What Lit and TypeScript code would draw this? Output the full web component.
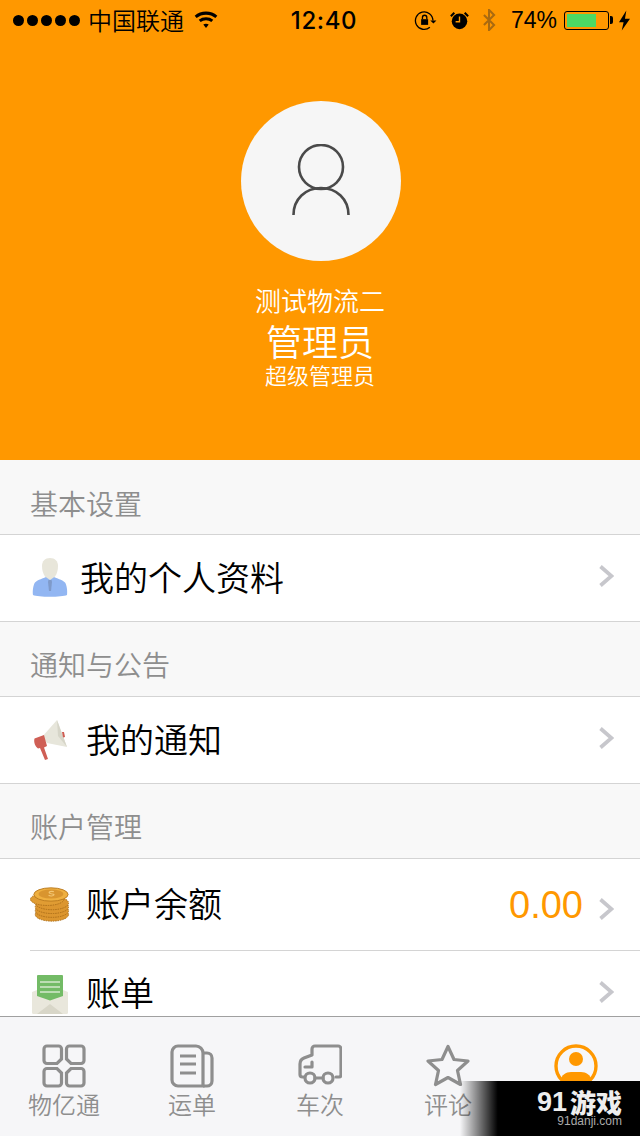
import { LitElement, html, css, svg } from 'lit';
import { customElement } from 'lit/decorators.js';

const personIcon = html`<svg width="36" height="40" viewBox="0 0 36 40">
  <path d="M1 37c-.6-4 .2-10 2-12.500 3-3 8.500-4 11-5.500h8c2.500 1.500 8 2.500 11 5.500 1.800 2.500 2.600 8.500 2 12.500-5 2.400-29 2.400-34 0z" fill="#92b6f2"/>
  <path d="M18 0c5 0 8 3 8 8 0 4-1 8-3 10.500l-5 3.500-5-3.500C11 16 10 12 10 8c0-5 3-8 8-8z" fill="#e8e6da"/>
  <path d="M16.500 22h3l.5 2-1 9h-2l-1-9z" fill="#7f9ac9"/>
</svg>`;

const hornIcon = html`<svg width="36" height="42" viewBox="0 0 36 42">
  <path d="M10 18 25 1l10 27-20-4z" fill="#e7e6db"/>
  <path d="M25 1l10 27-9-11z" fill="#d6d5c8"/>
  <path d="M30 13h2l1 5-2 .5z" fill="#ce5c52"/>
  <path d="M2.500 19.500 12 16l3 11-3 1.500 4 11.500-3 1-5-12-2 .5C3 27 1.500 23 2.500 19.500z" fill="#cf5f55"/>
</svg>`;

const coinsIcon = html`<svg width="42" height="37" viewBox="0 0 42 37">
  ${[29, 25, 21, 17].map(
    (y) => svg`<ellipse cx="23" cy=${y} rx="17.500" ry="7" fill="#dc962f" stroke="#a96c18" stroke-dasharray="1.500 1"/>`
  )}
  <ellipse cx="18" cy="13" rx="17.500" ry="6.500" fill="#e09c33" stroke="#a96c18" stroke-dasharray="1.500 1"/>
  <ellipse cx="22" cy="8" rx="18" ry="7" fill="#efb040" stroke="#b97a20"/>
  <ellipse cx="22" cy="7.500" rx="13" ry="4.800" fill="#d9952f"/>
  <path d="M25 5c-3-.8-6 .2-4.500 1.600s5.500.4 4.500 2-4.500.8-5.500.2" fill="none" stroke="#f3c673" stroke-width="1.200"/>
</svg>`;

const mailIcon = html`<svg width="36" height="39" viewBox="0 0 36 39">
  <path d="M0 17 5 15h26l5 2v20.500a1.500 1.500 0 0 1-1.500 1.500h-33A1.500 1.500 0 0 1 0 37.500z" fill="#e9e7dc"/>
  <path d="M5 39 18 29l13 10z" fill="#d8d6c8"/>
  <path d="M5 1a1 1 0 0 1 1-1h24a1 1 0 0 1 1 1v20l-13 4.500L5 21z" fill="#73bb66"/>
  <path d="M8 7h20M8 12h20M8 17h20" stroke="#d5e9cd" stroke-width="1.600"/>
</svg>`;

const tabIcons = {
  grid: html`<svg width="44" height="44" viewBox="0 0 44 44" fill="none" stroke="#8e8e8e" stroke-width="3.200">
    <path d="M5 2h11.500a3 3 0 0 1 3 3v10l-4.500 4.500H5a3 3 0 0 1-3-3V5a3 3 0 0 1 3-3z"/>
    <path d="M27.500 2H39a3 3 0 0 1 3 3v11.500a3 3 0 0 1-3 3H29L24.500 15V5a3 3 0 0 1 3-3z"/>
    <path d="M5 24.500h10l4.500 4.500v10a3 3 0 0 1-3 3H5a3 3 0 0 1-3-3V27.500a3 3 0 0 1 3-3z"/>
    <path d="M29 24.500h10a3 3 0 0 1 3 3V39a3 3 0 0 1-3 3H27.500a3 3 0 0 1-3-3V29z"/>
  </svg>`,
  doc: html`<svg width="44" height="44" viewBox="0 0 44 44" fill="none" stroke="#8e8e8e" stroke-width="3.200">
    <path d="M8 2h18a7 7 0 0 1 7 7v33H8a6 6 0 0 1-6-6V8a6 6 0 0 1 6-6z"/>
    <path d="M33 9h4a5 5 0 0 1 5 5v23a5 5 0 0 1-5 5h-4"/>
    <path d="M10 12h16M10 20h16M10 29h16"/>
  </svg>`,
  truck: html`<svg width="44" height="44" viewBox="0 0 44 44" fill="none" stroke="#8e8e8e" stroke-width="3.200" stroke-linecap="round" stroke-linejoin="round">
    <path d="M6 33H4.500A2.500 2.500 0 0 1 2 30.500V20c0-3 1.500-5 4-6l8-3V5a3 3 0 0 1 3-3h23a3 3 0 0 1 3 3v26a2 2 0 0 1-2 2h-3"/>
    <path d="M14 18v5H7"/>
    <path d="M17 34h8"/>
    <circle cx="12" cy="34" r="5"/>
    <circle cx="30" cy="34" r="5"/>
  </svg>`,
  star: html`<svg width="44" height="44" viewBox="0 0 44 44" fill="none" stroke="#8e8e8e" stroke-width="3.200" stroke-linejoin="round">
    <path d="M22 2.500l6 13 14 1.500-10.500 9.500 3 14L22 33.500 9.500 40.500l3-14L2 17l14-1.500z"/>
  </svg>`,
  me: html`<svg width="44" height="44" viewBox="0 0 44 44">
    <defs><clipPath id="me-clip"><circle cx="22" cy="22" r="19"/></clipPath></defs>
    <circle cx="22" cy="22" r="20" fill="none" stroke="#ff9800" stroke-width="3.400"/>
    <circle cx="22" cy="15" r="7" fill="#ff9800"/>
    <path d="M7 44V36c0-5 5-8 10-8h10c5 0 10 3 10 8v8z" fill="#ff9800" clip-path="url(#me-clip)"/>
  </svg>`,
};

const chevron = html`<svg class="chevron" width="15" height="22" viewBox="0 0 15 22" fill="none" stroke="#c7c7cc" stroke-width="3.800">
  <path d="M1.500 1.500 12.500 11l-11 9.500"/>
</svg>`;

@customElement('status-bar')
export class StatusBar extends LitElement {
  static styles = css`
    :host {
      display: flex;
      align-items: center;
      height: 40px;
      color: #000;
      font-family: 'Liberation Sans', 'Noto Sans CJK SC', sans-serif;
      font-size: 24px;
    }

    .left,
    .right {
      flex: 1;
      display: flex;
      align-items: center;
    }

    .right {
      justify-content: flex-end;
    }

    .dots {
      display: flex;
      gap: 3px;
      margin-left: 13px;
    }

    .dots i {
      width: 11px;
      height: 11px;
      border-radius: 50%;
      background: #000;
    }

    .carrier {
      margin-left: 8px;
      padding-bottom: 2px;
      font-family: 'Noto Sans CJK SC', sans-serif;
      font-weight: 350;
    }

    .wifi {
      margin: 0 0 1px 10px;
    }

    .time {
      margin-left: 8px;
      font-family: 'Inter', sans-serif;
      font-weight: 500;
      font-size: 24px;
      letter-spacing: 0.6px;
    }

    .percent {
      margin: 0 7px 0 14px;
      font-size: 23px;
    }

    .battery {
      display: flex;
      width: 45px;
      height: 19px;
      padding: 2px;
      border: 1px solid #000;
      border-radius: 3px;
      box-sizing: border-box;
    }

    .battery i {
      width: 74%;
      background: #4cd964;
    }

    .cap {
      width: 3px;
      height: 8px;
      margin: 0 6px 0 1px;
      border-radius: 0 2px 2px 0;
      background: #000;
    }

    .bolt {
      margin-right: 10px;
    }

    .lock {
      margin-right: 13px;
    }

    .alarm {
      margin-right: 12px;
    }
  `;

  render() {
    return html`
      <div class="left">
        <div class="dots"><i></i><i></i><i></i><i></i><i></i></div>
        <span class="carrier">中国联通</span>
        <svg class="wifi" width="24" height="18" viewBox="0 0 26 20" fill="none" stroke="#000" stroke-width="3.400">
          <path d="M1.500 6.500C8 1 18 1 24.500 6.500"/>
          <path d="M6 11c4-3.200 10-3.200 14 0"/>
          <path d="M10 15 13 19l3-4c-1.500-1-4.500-1-6 0z" fill="#000" stroke="none"/>
        </svg>
      </div>
      <span class="time">12:40</span>
      <div class="right">
        <svg class="lock" width="23" height="21" viewBox="0 0 26 24" fill="none" stroke="#000" stroke-width="1.500">
          <path d="M21.500 12A10 10 0 1 0 18 19.800"/>
          <path d="M18.500 12h7L22 15.500z" fill="#000" stroke="none"/>
          <path d="M8 10.500h8v6.500H8z" fill="#000" stroke="none"/>
          <path d="M9.500 10.500V8.500a2.500 2.500 0 0 1 5 0v2"/>
        </svg>
        <svg class="alarm" width="19" height="19" viewBox="0 0 22 22">
          <circle cx="11" cy="12" r="9" fill="#000"/>
          <path d="M11 6.500V12.500H6.500" fill="none" stroke="#ff9800" stroke-width="1.600"/>
          <path d="M1 6l4-4M21 6l-4-4" stroke="#000" stroke-width="2.400"/>
        </svg>
        <svg width="16" height="22" viewBox="0 0 16 26" fill="none" stroke="#a96a10" stroke-width="2.400">
          <path d="M2 7l12 12-6 6V1l6 6L2 19"/>
        </svg>
        <span class="percent">74%</span>
        <div class="battery"><i></i></div>
        <div class="cap"></div>
        <svg class="bolt" width="11" height="21" viewBox="0 0 12 22"><path d="M8 0 0 13h5l-2 9 9-13H6.500z" fill="#000"/></svg>
      </div>
    `;
  }
}

@customElement('app-root')
export class AppRoot extends LitElement {
  static styles = css`
    :host {
      display: flex;
      flex-direction: column;
      position: relative;
      width: 640px;
      height: 1136px;
      overflow: hidden;
      background: #f8f8f8;
      font-family: 'Noto Sans CJK SC', 'Liberation Sans', sans-serif;
    }

    .hero {
      flex: none;
      display: flex;
      flex-direction: column;
      align-items: center;
      height: 460px;
      background: #ff9800;
      color: #fff;
    }

    status-bar {
      align-self: stretch;
    }

    .avatar {
      display: flex;
      align-items: center;
      justify-content: center;
      width: 160px;
      height: 160px;
      margin: 61px 0 0 2px;
      border-radius: 50%;
      background: #f6f6f6;
    }

    .avatar svg {
      margin-bottom: 2px;
    }

    .company {
      margin-top: 23px;
      font-size: 26px;
      line-height: 32px;
      font-weight: 350;
    }

    .role {
      margin-top: 4px;
      font-size: 36px;
      line-height: 40px;
      font-weight: 350;
    }

    .level {
      font-size: 22px;
      line-height: 28px;
      font-weight: 350;
    }

    .list {
      flex: 1;
      min-height: 0;
      overflow: hidden;
    }

    .section {
      display: flex;
      align-items: center;
      height: 75px;
      padding: 10px 30px 0;
      box-sizing: border-box;
      border-bottom: 1px solid #d4d4d4;
      color: #8e8e8e;
      font-size: 28px;
      font-weight: 350;
    }

    .section:first-child {
      padding-top: 12px;
    }

    .row {
      display: flex;
      align-items: center;
      height: 87px;
      padding: 0 26px 0 30px;
      box-sizing: border-box;
      border-bottom: 1px solid #d4d4d4;
      background: #fff;
      color: #000;
      font-size: 34px;
      font-weight: 350;
    }

    .row.tall {
      position: relative;
      height: 92px;
      border-bottom: 0;
    }

    .row.tall::after {
      content: '';
      position: absolute;
      left: 30px;
      right: 0;
      bottom: 0;
      height: 1px;
      background: #d4d4d4;
    }

    .row.plain {
      height: 84px;
      border-bottom: 0;
    }

    .icon {
      flex: none;
      display: flex;
      justify-content: center;
      width: 40px;
      margin-right: 16px;
    }

    .row .label {
      flex: 1;
      margin-bottom: 3px;
    }

    .row.tall .label {
      margin-bottom: 5px;
    }

    .row.person .icon {
      margin-right: 10px;
    }

    .row.tall .icon {
      margin-bottom: 2px;
    }

    .row.plain .icon {
      margin-top: 2px;
    }

    .amount {
      margin-right: 16px;
      color: #ff9800;
      font-family: 'Liberation Sans', sans-serif;
      font-size: 38px;
    }

    .chevron {
      flex: none;
      margin-bottom: 4px;
    }

    .row.tall .chevron {
      margin: 7px 0 0;
    }

    .row.plain .chevron {
      margin-bottom: 2px;
    }

    .tabs {
      flex: none;
      display: grid;
      grid-template-columns: repeat(5, 1fr);
      height: 120px;
      box-sizing: border-box;
      border-top: 1px solid #a0a0a0;
      background: #f6f6f8;
    }

    .tab {
      display: flex;
      flex-direction: column;
      align-items: center;
      padding-top: 27px;
      color: #8e8e8e;
      font-size: 24px;
      line-height: 32px;
      font-weight: 350;
    }

    .mark {
      position: absolute;
      right: 0;
      bottom: 0;
      display: flex;
      flex-direction: column;
      align-items: flex-end;
      width: 180px;
      height: 55px;
      padding-right: 18px;
      box-sizing: border-box;
      background: linear-gradient(to right, rgba(0, 0, 0, 0), #000 21%);
      color: #eee;
    }

    .brand {
      display: flex;
      align-items: center;
      height: 26px;
      margin-top: 8px;
      font-size: 26px;
      line-height: 24px;
      font-weight: 900;
    }

    .brand em {
      margin-right: 3px;
      font-family: 'Liberation Sans', sans-serif;
      font-size: 27px;
      line-height: 24px;
      font-style: normal;
      font-weight: 700;
    }

    .mark small {
      color: #aaa;
      font-family: 'Liberation Sans', sans-serif;
      font-size: 12px;
      line-height: 12px;
    }
  `;

  render() {
    return html`
      <div class="hero">
        <status-bar></status-bar>
        <div class="avatar">
          <svg width="58" height="72" viewBox="0 0 58 72" fill="none" stroke="#4a4a4a" stroke-width="2.600">
            <circle cx="29" cy="23" r="22"/>
            <path d="M1.500 71c0-16 12-27 27.500-27s27.500 11 27.500 27"/>
          </svg>
        </div>
        <div class="company">测试物流二</div>
        <div class="role">管理员</div>
        <div class="level">超级管理员</div>
      </div>
      <div class="list">
        <div class="section">基本设置</div>
        <div class="row person">
          <div class="icon">${personIcon}</div>
          <span class="label">我的个人资料</span>
          ${chevron}
        </div>
        <div class="section">通知与公告</div>
        <div class="row">
          <div class="icon">${hornIcon}</div>
          <span class="label">我的通知</span>
          ${chevron}
        </div>
        <div class="section">账户管理</div>
        <div class="row tall">
          <div class="icon">${coinsIcon}</div>
          <span class="label">账户余额</span>
          <span class="amount">0.00</span>
          ${chevron}
        </div>
        <div class="row plain">
          <div class="icon">${mailIcon}</div>
          <span class="label">账单</span>
          ${chevron}
        </div>
      </div>
      <div class="tabs">
        <div class="tab">${tabIcons.grid}<span>物亿通</span></div>
        <div class="tab">${tabIcons.doc}<span>运单</span></div>
        <div class="tab">${tabIcons.truck}<span>车次</span></div>
        <div class="tab">${tabIcons.star}<span>评论</span></div>
        <div class="tab">${tabIcons.me}</div>
      </div>
      <div class="mark">
        <div class="brand"><em>91</em>游戏</div>
        <small>91danji.com</small>
      </div>
    `;
  }
}
